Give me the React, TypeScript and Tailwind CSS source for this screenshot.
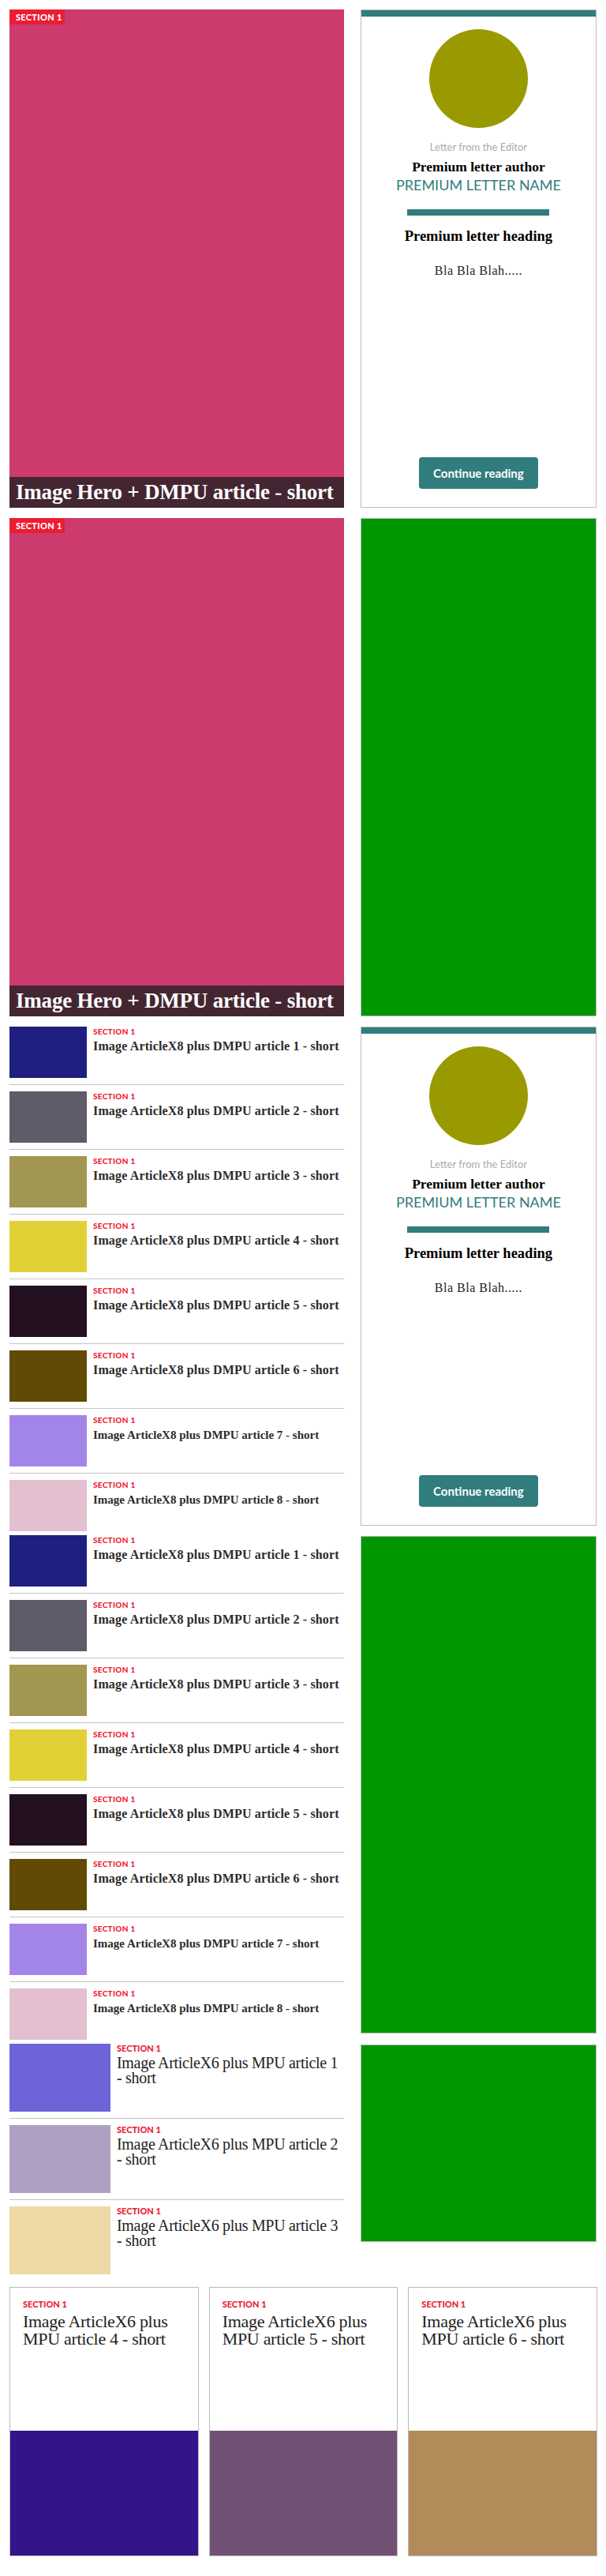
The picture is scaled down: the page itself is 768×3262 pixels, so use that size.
import React from 'react';

const serif = "font-['Liberation_Serif',serif]";
const sans = "font-['Lato','Open_Sans',sans-serif]";

const x8Colors = ['#1f1f80', '#5f5b69', '#a29750', '#e2d136', '#231020', '#614a04', '#a385e8', '#e4bfcf'];
const x6Colors = ['#6e63d8', '#afa0c2', '#efd9a6'];
const cardColors = ['#33148a', '#725274', '#b38a59'];

const SectionLabel: React.FC<{ className?: string }> = ({ className = '' }) => (
  <div className={`${sans} font-black text-[#ed1c33] uppercase ${className}`}>Section 1</div>
);

const Hero: React.FC = () => (
  <div className="relative w-[425px] h-[631px] flex flex-col bg-[#cc3a6e]">
    <span className={`absolute top-0 left-0 w-[70px] h-[19px] bg-[#ed1c33] text-white ${sans} font-black text-[11px] leading-[19px] pl-2 tracking-[0.3px]`}>
      SECTION 1
    </span>
    <div className="flex-1" />
    <div className={`h-[39px] bg-[#442633] text-white ${serif} font-bold text-[27px] leading-[39px] pl-2 whitespace-nowrap tracking-[-0.2px]`}>
      Image Hero + DMPU article - short
    </div>
  </div>
);

const LetterCard: React.FC<{ h: string }> = ({ h }) => (
  <div className={`w-[300px] ${h} border border-[#bbbbbb] flex flex-col items-center text-center bg-white`}>
    <div className="w-full h-2 bg-[#317c7c]" />
    <div className="mt-4 w-[125px] h-[125px] rounded-full bg-[#999900]" />
    <div className={`mt-4 ${sans} text-[13px] leading-4 text-[#aaaaaa]`}>Letter from the Editor</div>
    <div className={`mt-[7px] ${serif} font-bold text-[17.5px] leading-5 text-black`}>Premium letter author</div>
    <div className={`mt-[2px] ${sans} text-[18px] leading-[22px] text-[#317c7c]`}>PREMIUM LETTER NAME</div>
    <div className="mt-5 w-[180px] h-2 bg-[#317c7c]" />
    <div className={`mt-[15px] ${serif} font-bold text-[18.5px] leading-[22px] text-black`}>Premium letter heading</div>
    <div className={`mt-[22px] ${serif} text-[16px] leading-[22px] tracking-[0.5px] text-[#222]`}>Bla Bla Blah.....</div>
    <button className={`mt-auto mb-[23px] h-10 w-[151px] rounded bg-[#317c7c] text-white ${sans} font-bold text-[15px]`}>
      Continue reading
    </button>
  </div>
);

const Ad: React.FC<{ h: string }> = ({ h }) => (
  <div className={`w-[300px] ${h} mt-px bg-[#009600] border border-[#b5b5b5]`} />
);

const X8List: React.FC = () => (
  <div className="w-[425px] flex flex-col">
    {x8Colors.map((c, i) => (
      <div
        key={i}
        className={`flex gap-2 ${i < 7 ? 'pb-2 mb-2 border-b border-[#c4c4c4]' : ''}`}
      >
        <div className="w-[98px] h-[65px] shrink-0" style={{ background: c }} />
        <div>
          <SectionLabel className="text-[10px] leading-[12px] tracking-[0.3px]" />
          <div
            className={`mt-[3px] ${serif} font-bold leading-5 text-[#2b2b2b] whitespace-nowrap ${
              i < 6 ? 'text-[16px] tracking-[0.15px]' : 'text-[15px]'
            }`}
          >
            Image ArticleX8 plus DMPU article {i + 1} - short
          </div>
        </div>
      </div>
    ))}
  </div>
);

const X6List: React.FC = () => (
  <div className="w-[425px] flex flex-col">
    {x6Colors.map((c, i) => (
      <div key={i} className={`flex gap-2 ${i < 2 ? 'pb-2 mb-2 border-b border-[#c4c4c4]' : ''}`}>
        <div className="w-[128px] h-[86px] shrink-0" style={{ background: c }} />
        <div className="flex-1">
          <SectionLabel className="text-[11px] leading-3" />
          <div className={`mt-[3px] ${serif} text-[20px] leading-[19px] tracking-[-0.3px] text-[#222]`}>
            Image ArticleX6 plus MPU article {i + 1} - short
          </div>
        </div>
      </div>
    ))}
  </div>
);

const BottomCard: React.FC<{ n: number; color: string }> = ({ n, color }) => (
  <div className="border border-[#bbbbbb] flex flex-col">
    <div className="h-[181px] px-4 pt-[15px]">
      <SectionLabel className="text-[11px] leading-3" />
      <div className={`mt-[5px] ${serif} text-[22px] leading-[22px] tracking-[-0.3px] text-[#222]`}>
        Image ArticleX6 plus MPU article {n} - short
      </div>
    </div>
    <div className="h-[158px]" style={{ background: color }} />
  </div>
);

const App: React.FC = () => {
  return (
    <div className="w-[768px] bg-white px-3 pt-3 pb-[25px]">
      <div className="flex gap-[21px] mb-[13px]">
        <Hero />
        <LetterCard h="h-[631px]" />
      </div>
      <div className="flex gap-[21px] mb-[13px]">
        <Hero />
        <div className="w-[300px] h-[631px] bg-[#009600] border border-[#b5b5b5]" />
      </div>
      <div className="flex items-start gap-[21px] mb-[5px]">
        <X8List />
        <LetterCard h="h-[632px]" />
      </div>
      <div className="flex items-start gap-[21px] mb-[5px]">
        <X8List />
        <Ad h="h-[630px]" />
      </div>
      <div className="flex items-start gap-[21px] mb-4">
        <X6List />
        <Ad h="h-[250px]" />
      </div>
      <div className="w-[745px] grid grid-cols-3 gap-[13px]">
        {cardColors.map((c, i) => (
          <BottomCard key={i} n={i + 4} color={c} />
        ))}
      </div>
    </div>
  );
};

export default App;
